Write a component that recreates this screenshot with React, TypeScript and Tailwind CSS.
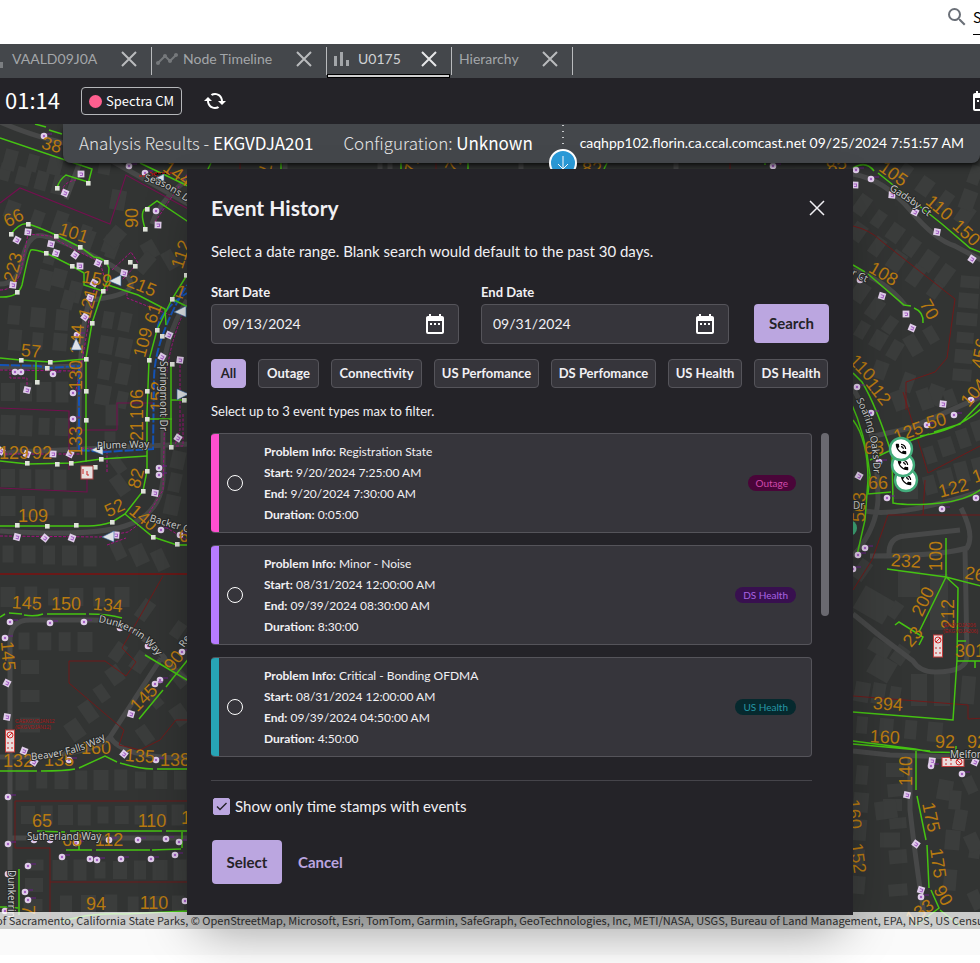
import { useState } from "react";
import {
  MdCached,
  MdDateRange,
  MdPhoneInTalk,
  MdSearch,
  MdTimeline,
} from "react-icons/md";

type Label = [text: string, x: number, y: number, angle: number];

const footage: Label[] = [
  ["38", 52, 144, 15],
  ["144", 178, 173, 35],
  ["66", 13, 217, -25],
  ["101", 74, 232, 18],
  ["90", 131, 218, -90],
  ["223", 12, 267, -75],
  ["159", 97, 278, 10],
  ["215", 142, 285, 22],
  ["112", 180, 254, -72],
  ["1", 181, 291, 20],
  ["61", 152, 313, -70],
  ["109", 142, 342, -75],
  ["121", 87, 303, -75],
  ["144", 76, 339, -86],
  ["57", 31, 350, 5],
  ["130", 75, 375, -90],
  ["106", 136, 404, -90],
  ["121", 136, 436, -90],
  ["152", 156, 396, -88],
  ["133", 75, 441, -90],
  ["129", 14, 452, 0],
  ["92", 42, 452, 0],
  ["82", 135, 478, -75],
  ["52", 114, 507, -25],
  ["109", 33, 515, 0],
  ["140", 144, 517, 40],
  ["6", 184, 535, 0],
  ["145", 27, 602, 3],
  ["150", 66, 603, 0],
  ["134", 108, 604, 5],
  ["145", 9, 656, 85],
  ["90", 173, 660, -50],
  ["145", 143, 697, -45],
  ["132", 18, 760, 0],
  ["135", 59, 759, 0],
  ["160", 96, 747, 0],
  ["135", 140, 755, 4],
  ["138", 175, 759, 0],
  ["65", 42, 820, 0],
  ["110", 152, 820, 0],
  ["1", 186, 817, 0],
  ["68", 72, 839, 0],
  ["112", 109, 839, 0],
  ["94", 96, 903, 0],
  ["110", 154, 902, 0],
  ["7", 29, 910, 90],
  ["17", 267, 164, 100],
  ["71", 411, 164, -80],
  ["72", 454, 162, -60],
  ["82", 592, 168, 0],
  ["85", 836, 164, -20],
  ["105", 894, 173, 35],
  ["110", 940, 207, 40],
  ["150", 967, 232, 42],
  ["108", 884, 273, 30],
  ["70", 930, 309, 60],
  ["110", 863, 367, 45],
  ["112", 879, 391, 52],
  ["104", 973, 392, -50],
  ["456", 979, 353, -80],
  ["125", 908, 431, -20],
  ["50", 936, 420, -15],
  ["68", 874, 447, 0],
  ["66", 878, 482, 0],
  ["122", 953, 487, -15],
  ["1", 977, 475, -20],
  ["563", 858, 507, -88],
  ["232", 906, 560, 4],
  ["100", 935, 556, -90],
  ["200", 922, 601, -65],
  ["212", 947, 614, -90],
  ["23", 912, 636, -50],
  ["26", 975, 573, 10],
  ["301", 970, 650, 0],
  ["394", 888, 703, 4],
  ["160", 885, 736, 3],
  ["92", 945, 741, 0],
  ["92", 977, 741, 0],
  ["140", 905, 771, -90],
  ["175", 932, 817, 78],
  ["175", 939, 863, 82],
  ["90", 944, 895, 60],
  ["133", 919, 911, -35],
  ["160", 855, 814, 85],
  ["152", 859, 858, 82],
];

const streets: { name: string; path: string }[] = [
  { name: "Seasons Dr", path: "M144 181Q166 185 190 205" },
  { name: "Springmont Dr", path: "M160 361V440" },
  { name: "Plume Way", path: "M97 449L160 447" },
  { name: "Backer Ct", path: "M149 521L200 536" },
  { name: "Dunkerrin Way", path: "M98 622Q145 630 162 664" },
  { name: "Rea", path: "M184 648L195 632" },
  { name: "Beaver Falls Way", path: "M31 760Q90 756 120 728" },
  { name: "Sutherland Way", path: "M27 840L112 840" },
  { name: "Dunkerrin", path: "M8 870V926" },
  { name: "Gadsby Ct", path: "M889 190Q910 202 937 224" },
  { name: "r Ct", path: "M851 275L873 286" },
  { name: "Soaring Oaks Dr", path: "M856 400Q876 436 873 482" },
  { name: "Dr", path: "M853 509L870 509" },
  { name: "Melford", path: "M950 758L990 758" },
];

const roads = [
  "M0 122Q30 135 60 142T110 160T190 205",
  "M80 162L66 199",
  "M187 180Q160 200 152 224",
  "M0 284Q18 284 22 262T36 236T105 262T90 300Q78 330 79 450",
  "M0 367H50L78 366",
  "M0 455Q10 451 40 451L190 444",
  "M187 300Q163 340 163 380V480Q160 515 125 526T0 531",
  "M10 926V640Q10 620 30 620H92Q120 620 145 640T164 660L187 680",
  "M160 660L110 737Q122 758 187 758",
  "M110 737Q95 757 0 757",
  "M10 838H190",
  "M285 163V169",
  "M380 163V169M390 163V169M521 163V169",
  "M676 163V169",
  "M853 174Q885 180 910 210T955 246L985 262",
  "M853 270Q885 280 905 305",
  "M853 388Q878 430 878 500Q876 530 853 556",
  "M870 437L910 428L985 395",
  "M865 511Q900 518 985 490",
  "M961 508Q975 535 967 548Q940 556 870 556",
  "M889 556Q888 537 905 536L960 530",
  "M965 549L967 655Q968 672 935 672Q920 672 913 661L880 636L853 614",
  "M853 751L890 755L985 758",
  "M910 756V810Q918 880 926 926",
];

const greenLines = [
  "M0 138L92 169L88 184M88 182L66 175Q59 180 57 188",
  "M35 124L46 127M49 130L62 134",
  "M11 234Q20 222 28 224T56 235L80 247L94 257Q106 258 109 268L108 280L103 291L84 285V273L72 266L46 253Q33 249 31 250T22 285Q18 298 0 297",
  "M108 285L138 295L165 309L166 325",
  "M103 290L92 323L86 358V462",
  "M0 358L20 360L50 362L86 359M36 362V382",
  "M145 228Q139 210 147 208L157 201L190 223",
  "M140 163L190 187",
  "M187 275L172 299L157 330L149 360L147 413V471L143 491L125 514L112 522Q100 526 88 526H0M125 514L153 537L177 545H190",
  "M147 456L101 459L72 463L28 464L0 461",
  "M171 447V364M171 400H190M147 419H172M165 380V400",
  "M172 299L190 308",
  "M0 617L5 614M9 613L22 614M24 615Q35 617 43 614M47 614H86M89 614Q108 614 122 618",
  "M145 655L187 680M173 678L166 687M163 690L139 719M190 657L173 678",
  "M0 771H37M41 771Q65 771 75 769M79 768L105 756L117 762M120 763Q140 769 153 769M157 769H190",
  "M37 831L65 832M70 831H162M166 831H190M66 850H92M96 850H150M152 850L181 849M182 832V848M79 840V850",
  "M19 869V915M0 907H10L18 908",
  "M60 922Q90 912 125 914L187 911",
  "M208 169L211 163M281 169V163M401 163V169M468 163V169M604 169L607 163M765 165V163",
  "M853 168Q866 160 874 171M878 173L942 224L970 248L985 254",
  "M853 265L865 272M868 274L904 305L911 306M914 308Q924 312 923 323",
  "M853 373L862 382Q876 405 892 455L893 503Q910 506 940 503T985 486",
  "M853 420Q868 440 868 480L865 520L857 555",
  "M850 400Q866 435 870 475L868 494L891 492M870 460L889 451",
  "M893 449L912 440L929 434M934 432L960 424L985 398M920 436Q960 430 985 405",
  "M887 569L946 577L985 587M946 577V538M946 577L919 632M895 625L899 622L923 637L919 645M946 577L958 588L957 660L953 720L853 712",
  "M957 641H966M957 661H985M975 661V668",
  "M853 741L915 749L931 752L985 753M853 744L930 751M916 751V790M917 796L926 840M927 845L929 888M931 890L939 908L915 926M940 910L960 926M956 746V754",
];

const blueLines = [
  "M0 365L38 366L48 368L79 366V450L104 452L153 449L154 380Q154 340 187 285",
  "M157 330Q160 310 187 293",
];

const magentaLines = [
  "M0 203L20 188L110 224L126 175L190 210",
  "M0 408L69 411V470M117 430V403H153M69 430H117",
  "M0 488L87 492V470",
];

const dashedLines = [
  "M0 290Q18 290 22 265L28 234L50 236L75 250L100 262L108 290L94 290L84 350L75 395",
  "M112 270L131 252L138 263L122 280",
  "M127 293V298L170 315M0 370L75 371M10 372V378H27V388",
  "M0 536L100 537L128 532L145 520L163 490L165 400Q165 350 187 305",
  "M107 545L126 538M107 472V450L80 448",
  "M0 454L80 454M180 365V430L175 445M183 414V446H176",
  "M62 192Q63 182 76 180M155 222L190 170M150 518L187 540",
];

const darkRedLines = [
  "M163 576L122 648L136 662L126 676L105 661H69V683L124 730L119 745L140 750L160 740L176 720H190",
  "M15 848V801H190M15 848H50V926M50 882H190",
  "M240 163V169M436 163V169M730 163V169",
  "M853 226Q870 230 880 240L955 299L947 358L935 372L906 382V410",
  "M903 392L928 473L980 446M925 480L923 515M853 590L872 560L888 515H985",
  "M853 696L968 705V719L985 718",
];

// x1, y1, x2, y2, how many, angle
const houseRows: number[][] = [
  [5, 172, 60, 185, 4, 15], [105, 165, 118, 200, 2, 10], [10, 160, 55, 166, 3, 15],
  [12, 210, 112, 250, 5, 20], [45, 280, 75, 292, 2, 15], [50, 256, 68, 300, 3, 15],
  [14, 315, 62, 320, 3, 5], [15, 340, 60, 342, 3, 5], [8, 392, 62, 392, 4, 0],
  [8, 425, 62, 427, 4, 2], [108, 320, 103, 395, 4, 10], [125, 322, 122, 400, 4, 12],
  [112, 415, 110, 440, 2, 0], [8, 478, 60, 480, 4, 0], [8, 506, 90, 508, 5, 0],
  [8, 554, 90, 556, 5, 0], [118, 550, 160, 560, 3, -25], [120, 485, 118, 465, 2, -35],
  [178, 460, 172, 505, 3, 12], [8, 597, 122, 597, 6, 0], [24, 641, 85, 642, 4, 0],
  [118, 652, 140, 662, 2, 35], [145, 610, 178, 630, 2, 35], [30, 667, 30, 725, 3, 90],
  [75, 730, 115, 675, 4, -35], [155, 700, 180, 678, 2, -40], [145, 735, 180, 715, 2, -35],
  [22, 780, 180, 780, 9, 0], [28, 815, 178, 815, 9, 0], [60, 870, 180, 870, 7, 0],
  [35, 865, 33, 905, 3, 90], [66, 905, 178, 905, 6, 0], [60, 222, 110, 245, 3, 20],
  [150, 250, 170, 260, 2, -30], [115, 237, 145, 263, 2, 40],
  [905, 172, 965, 215, 4, 35], [975, 175, 968, 200, 2, 20], [862, 205, 945, 275, 6, 35],
  [858, 232, 935, 290, 5, 35], [860, 292, 890, 325, 3, 35], [862, 330, 895, 350, 3, 30],
  [970, 282, 962, 375, 6, 95], [913, 345, 931, 335, 2, -30], [880, 370, 935, 395, 3, 20],
  [900, 400, 950, 398, 3, -20], [930, 455, 980, 430, 4, -18], [930, 485, 978, 466, 4, -15],
  [862, 570, 895, 610, 2, 35], [900, 655, 880, 665, 2, 35], [862, 692, 895, 695, 3, 10],
  [862, 725, 935, 732, 4, 5], [862, 775, 858, 885, 5, 5], [898, 790, 898, 890, 4, 85],
  [895, 770, 890, 840, 3, 90], [945, 790, 975, 850, 3, 10], [970, 785, 976, 900, 3, -25],
  [955, 800, 950, 880, 3, 5],
];

const bigHouses: number[][] = [
  [874, 605, 34, 26, 30], [909, 584, 22, 26, 0], [939, 602, 18, 56, 0],
  [905, 492, 26, 14, 0], [919, 690, 16, 32, 0], [942, 690, 16, 32, 0],
  [968, 690, 14, 28, 5], [882, 668, 24, 22, 30], [880, 648, 22, 14, 30],
  [886, 810, 22, 18, -8],
];

const joints: number[][] = [
  [57, 188], [88, 183], [11, 234], [28, 224], [56, 236], [80, 247], [106, 262],
  [46, 253], [72, 266], [17, 292], [103, 291], [92, 323], [86, 359], [21, 360],
  [50, 362], [37, 382], [86, 391], [147, 209], [145, 229], [172, 299], [157, 330],
  [149, 360], [147, 391], [172, 364], [86, 420], [147, 419], [147, 471], [143, 491],
  [112, 522], [76, 525], [47, 526], [17, 525], [153, 537], [177, 544], [171, 447],
  [101, 459], [71, 463], [57, 464], [27, 463], [130, 262], [135, 266], [95, 467],
  [162, 336], [47, 368], [184, 400], [186, 275],
];

const squareTaps: number[][] = [
  [81, 174], [65, 193], [28, 232], [17, 240], [51, 244], [75, 255], [56, 253],
  [80, 266], [98, 263], [13, 285], [94, 283], [124, 273], [85, 317], [90, 298],
  [158, 225], [169, 335], [180, 360], [162, 357], [27, 390], [1, 451], [27, 454],
  [53, 454], [70, 454], [155, 493], [178, 438], [17, 537], [45, 538], [72, 538],
  [116, 535], [7, 683], [7, 717], [34, 762], [131, 714], [124, 754], [24, 751],
  [892, 195], [915, 212], [937, 232], [972, 259], [882, 296], [906, 314], [912, 328],
  [943, 404], [859, 476], [907, 795], [916, 844], [921, 890], [855, 185], [975, 762],
  [932, 761],
];

const roundTaps: number[][] = [
  [44, 136], [129, 166], [145, 173], [156, 211], [15, 372], [21, 372], [53, 374],
  [73, 393], [73, 419], [77, 335], [159, 468], [159, 475], [161, 530], [180, 535],
  [10, 622], [50, 623], [84, 622], [5, 638], [182, 652], [120, 628], [148, 646],
  [160, 680], [155, 684], [69, 760], [156, 760], [8, 797], [8, 844], [34, 840],
  [50, 840], [76, 843], [109, 840], [138, 840], [166, 839], [179, 842], [62, 857],
  [90, 859], [97, 860], [121, 859], [151, 859], [175, 855], [28, 866], [25, 892],
  [28, 900], [8, 874], [5, 911], [185, 901], [773, 166], [856, 170], [871, 179],
  [860, 280], [857, 387], [871, 413], [927, 425], [954, 415], [971, 400], [879, 462],
  [887, 498], [942, 509], [976, 498], [865, 548], [858, 555], [853, 569], [931, 766],
  [962, 774], [921, 897],
];

// direction the amplifier points to, in degrees
const amplifiers: number[][] = [
  [115, 281, 180], [180, 312, 180], [76, 344, -90], [97, 450, 180], [183, 394, 0],
  [108, 537, 180], [158, 180, 180],
];

const cabinets: number[][] = [
  [10, 741, 0], [938, 646, 0], [953, 762, 90],
];

const phones: number[][] = [
  [906, 480], [903, 465], [901, 449],
];

function Houses() {
  return (
    <g fill="#3b3d3c">
      {houseRows.flatMap(([x1, y1, x2, y2, count, angle], row) =>
        Array.from({ length: count }, (_, i) => {
          const t = count > 1 ? i / (count - 1) : 0;
          const x = x1 + (x2 - x1) * t;
          const y = y1 + (y2 - y1) * t;
          const w = 11 + ((row + i * 3) % 5);
          const h = 17 + ((row * 2 + i) % 5);
          return (
            <rect
              key={`${row}-${i}`}
              x={x - w / 2}
              y={y - h / 2}
              width={w}
              height={h}
              transform={`rotate(${angle} ${x} ${y})`}
            />
          );
        }),
      )}
      {bigHouses.map(([x, y, w, h, angle]) => (
        <rect
          key={`${x}-${y}`}
          x={x - w / 2}
          y={y - h / 2}
          width={w}
          height={h}
          transform={`rotate(${angle} ${x} ${y})`}
        />
      ))}
    </g>
  );
}

function PlantMap() {
  return (
    <svg
      viewBox="0 124 980 805"
      preserveAspectRatio="xMidYMin slice"
      className="absolute inset-0 size-full bg-[#323433]"
      role="img"
      aria-label="Network plant map"
    >
      <Houses />
      <g fill="none" stroke="#474848" strokeWidth="5">
        {roads.map((d) => (
          <path key={d} d={d} />
        ))}
      </g>
      <g fill="none" stroke="#761616" strokeWidth="0.9">
        {darkRedLines.map((d) => (
          <path key={d} d={d} />
        ))}
      </g>
      <path d="M0 574H190" stroke="#7c1010" strokeWidth="1.4" />
      <g fill="none" stroke="#73104f" strokeWidth="1.1">
        {magentaLines.map((d) => (
          <path key={d} d={d} />
        ))}
      </g>
      <g fill="none" stroke="#a3117f" strokeWidth="1" strokeDasharray="3 1.5">
        {dashedLines.map((d) => (
          <path key={d} d={d} />
        ))}
      </g>
      <g fill="none" stroke="#1453b8" strokeWidth="2" strokeDasharray="9 2">
        {blueLines.map((d) => (
          <path key={d} d={d} />
        ))}
      </g>
      <g fill="none" stroke="#45c312" strokeWidth="1.5">
        {greenLines.map((d) => (
          <path key={d} d={d} />
        ))}
      </g>
      <g fill="#dfe3da">
        {joints.map(([x, y]) => (
          <rect key={`${x}-${y}`} x={x - 2} y={y - 2} width="4.6" height="4.6" />
        ))}
      </g>
      {squareTaps.map(([x, y], i) => (
        <g key={i} transform={`translate(${x} ${y}) rotate(${(i * 23) % 40})`}>
          <rect x="-3.4" y="-3.4" width="6.8" height="6.8" fill="#e0cdea" />
          <path d="M-1.5 -1H1.5V1.5H-1" fill="none" stroke="#a45fc4" />
        </g>
      ))}
      {roundTaps.map(([x, y], i) => (
        <g key={i}>
          <path d={`M${x + 3} ${y - 2}h5`} stroke="#6d1f8a" strokeWidth="1" />
          <circle cx={x} cy={y} r="3.3" fill="#e0cdea" />
          <circle cx={x} cy={y} r="1.2" fill="#a45fc4" />
        </g>
      ))}
      {cabinets.map(([x, y, angle]) => (
        <g key={x} transform={`translate(${x} ${y}) rotate(${angle})`}>
          <rect x="-4.5" y="-11" width="9" height="22" fill="#eadcdc" stroke="#c23b3b" />
          <circle cy="-6" r="3" fill="none" stroke="#cf2b2b" />
          <path d="M-2 -4L2 -8M-3 2h2M1 2h2M-3 7h2M1 7h2" stroke="#cf2b2b" />
        </g>
      ))}
      <g>
        <rect x="81" y="466" width="12" height="13" fill="#e6e0e0" stroke="#a34141" />
        <path d="M83 469v5M87 471v4h2" stroke="#c22" fill="none" />
      </g>
      <path d="M139 176h12l4 -3h20M150 172l10 6" stroke="#e01414" strokeDasharray="3 1" />
      <g
        fontFamily="Liberation Sans, Arial, sans-serif"
        fontSize="18"
        fill="#b87a10"
        textAnchor="middle"
      >
        {footage.map(([text, x, y, angle], i) => (
          <text key={i} x={x} y={y + 7} transform={`rotate(${angle} ${x} ${y})`}>
            {text}
          </text>
        ))}
      </g>
      {amplifiers.map(([x, y, angle]) => (
        <path
          key={`${x}-${y}`}
          d="M-6 -5L6 0L-6 6Z"
          fill="#dfe3e6"
          stroke="#2a5e9e"
          strokeWidth="0.6"
          transform={`translate(${x} ${y}) rotate(${angle})`}
        />
      ))}
      <g fill="#a81616" fontFamily="Liberation Sans, Arial, sans-serif" fontSize="5">
        <text x="15" y="723">CAEKGVDJAN12</text>
        <text x="15" y="729">(EKGVDJAN12)</text>
        <text x="944" y="627">EKGVDJA206</text>
        <text x="943" y="633">(EKGVDJA206)</text>
      </g>
      <g
        fontFamily="Noto Sans, sans-serif"
        fontSize="10"
        fill="#c9caca"
        stroke="#262827"
        strokeWidth="2"
        paintOrder="stroke"
      >
        {streets.map(({ name, path }, i) => (
          <g key={i}>
            <path id={`street-${i}`} d={path} fill="none" stroke="none" />
            <text>
              <textPath href={`#street-${i}`}>{name}</textPath>
            </text>
          </g>
        ))}
      </g>
      <circle cx="849" cy="528" r="8" fill="#3fa878" />
      {phones.map(([x, y]) => (
        <g key={y}>
          <circle cx={x} cy={y} r="11" fill="#fff" stroke="#43ad7c" strokeWidth="2.4" />
          <MdPhoneInTalk x={x - 7} y={y - 7} size={14} color="#050505" />
        </g>
      ))}
    </svg>
  );
}

function Cross({ className }: { className: string }) {
  return (
    <svg viewBox="0 0 16 16" className={className} fill="none" stroke="currentColor">
      <path d="M1 1L15 15M15 1L1 15" />
    </svg>
  );
}

function Bars() {
  return (
    <svg viewBox="0 0 15 14" className="h-3.5 w-[15px]" fill="currentColor">
      <path d="M0 4h3v10H0zM6 0h3v14H6zM12 8h3v6h-3z" />
    </svg>
  );
}

function TabBar() {
  return (
    <nav
      aria-label="Open views"
      className="flex h-[34px] items-start overflow-hidden bg-[#44474b] pt-[3px] font-['Lato',sans-serif] text-sm text-[#a3a6a9]"
    >
      <div className="-ml-3 flex h-7 w-[164px] items-center border-r border-[#b9bbbd] pr-3.5">
        <span className="text-[#7b7e81]">
          <Bars />
        </span>
        <a href="#vaald" className="ml-[9px] flex-1 pb-1">
          VAALD09J0A
        </a>
        <button type="button" aria-label="Close VAALD09J0A" className="pb-1">
          <Cross className="size-4 stroke-2 text-[#b9bbbd]" />
        </button>
      </div>
      <div className="flex h-7 w-[175px] items-center border-r border-[#b9bbbd] pr-3.5 pl-[3px]">
        <MdTimeline className="mb-1 size-6 text-[#75787b]" />
        <a href="#timeline" className="ml-1 flex-1 pb-1">
          Node Timeline
        </a>
        <button type="button" aria-label="Close Node Timeline" className="pb-1">
          <Cross className="size-4 stroke-2 text-[#b9bbbd]" />
        </button>
      </div>
      <div className="relative flex h-7 w-[125px] items-center border-r border-[#b9bbbd] pr-3.5 pl-[7px] text-[#d0d2d3]">
        <span className="pb-1 text-[#a3a6a9]">
          <Bars />
        </span>
        <a href="#u0175" aria-current="page" className="ml-[9px] flex-1 pb-1">
          U0175
        </a>
        <button type="button" aria-label="Close U0175" className="pb-1">
          <Cross className="size-4 stroke-2 text-[#e6e7e8]" />
        </button>
        <span className="absolute -bottom-[3px] left-0 h-1 w-[123px] border border-black bg-[#cfcfcf]" />
      </div>
      <div className="flex h-7 w-[121px] items-center border-r border-[#b9bbbd] pr-3.5 pl-[7px]">
        <a href="#hierarchy" className="flex-1 pb-1">
          Hierarchy
        </a>
        <button type="button" aria-label="Close Hierarchy" className="pb-1">
          <Cross className="size-4 stroke-2 text-[#b9bbbd]" />
        </button>
      </div>
    </nav>
  );
}

function Toolbar() {
  return (
    <div className="flex h-[46px] items-center overflow-hidden bg-[#242328] font-['Noto_Sans_CJK_SC',sans-serif] text-white">
      <span className="w-[81px] pb-1 pl-[5px] text-[22px] leading-7">01:14</span>
      <button
        type="button"
        className="flex h-7 w-[101px] items-center gap-1 rounded border border-[#b5b7ba] pl-[7px] text-[13px] whitespace-nowrap"
      >
        <span className="size-[13px] shrink-0 rounded-full bg-[#ff5f8f]" />
        <span>Spectra CM</span>
      </button>
      <button type="button" aria-label="Refresh" className="ml-[21px]">
        <MdCached className="size-6 -scale-x-100" />
      </button>
      <button type="button" aria-label="Pick a date" className="-mr-3.5 ml-auto">
        <MdDateRange className="size-6" />
      </button>
    </div>
  );
}

function AnalysisBar() {
  return (
    <div className="relative ml-[63px] flex h-[39px] items-center rounded-b-lg bg-[#44474b] pr-4 pl-4 whitespace-nowrap text-white shadow-md shadow-black/60">
      <div className="flex w-[470px] shrink-0 gap-[30px] pb-0.5 font-['Noto_Sans_CJK_SC',sans-serif] text-[17px] leading-6 font-light text-[#e3e4e5]">
        <span>
          Analysis Results - <b className="text-white">EKGVDJA201</b>
        </span>
        <span>
          Configuration: <b className="text-white">Unknown</b>
        </span>
      </div>
      <div className="h-full w-7 shrink-0">
        <svg viewBox="0 0 2 25" className="mx-auto h-[25px] w-0.5">
          <path d="M1 1V22" stroke="#c9cbcd" strokeWidth="2" strokeDasharray="1 5" />
        </svg>
        <button
          type="button"
          aria-label="Expand results"
          className="flex size-7 items-center justify-center rounded-full border-2 border-white bg-[#2a9ad8]"
        >
          <svg viewBox="0 0 12 14" className="h-3.5 w-3" fill="none" stroke="#fff">
            <path d="M6 0V13M1 8L6 13L11 8" />
          </svg>
        </button>
      </div>
      <span className="ml-auto pb-0.5 font-['Lato',sans-serif] text-sm">
        caqhpp102.florin.ca.ccal.comcast.net 09/25/2024 7:51:57 AM
      </span>
    </div>
  );
}

const eventTypes = [
  { name: "All", className: "w-[35px]" },
  { name: "Outage", className: "w-[61px]" },
  { name: "Connectivity", className: "w-[91px]" },
  { name: "US Perfomance", className: "w-[105px]" },
  { name: "DS Perfomance", className: "w-[105px]" },
  { name: "US Health", className: "w-[74px]" },
  { name: "DS Health", className: "w-[74px]" },
];

const events = [
  {
    info: "Registration State",
    start: "9/20/2024 7:25:00 AM",
    end: "9/20/2024 7:30:00 AM",
    duration: "0:05:00",
    type: "Outage",
    stripe: "bg-[#ff4fd0]",
    pill: "bg-[#4a0539] text-[#d049ac]",
  },
  {
    info: "Minor - Noise",
    start: "08/31/2024 12:00:00 AM",
    end: "09/39/2024 08:30:00 AM",
    duration: "8:30:00",
    type: "DS Health",
    stripe: "bg-[#b77bff]",
    pill: "bg-[#38104f] text-[#a963e2]",
  },
  {
    info: "Critical - Bonding OFDMA",
    start: "08/31/2024 12:00:00 AM",
    end: "09/39/2024 04:50:00 AM",
    duration: "4:50:00",
    type: "US Health",
    stripe: "bg-[#27a4b5]",
    pill: "bg-[#06292e] text-[#2697a5]",
  },
];

function DateField({ id, label, value }: { id: string; label: string; value: string }) {
  return (
    <div className="w-[248px]">
      <label htmlFor={id} className="block h-5 text-[13px] leading-4 font-bold">
        {label}
      </label>
      <div className="flex h-10 items-center rounded border border-[#55545a] bg-[#36353b] pr-[11px] pl-[11px]">
        <input
          id={id}
          type="text"
          defaultValue={value}
          className="min-w-0 flex-1 bg-transparent text-sm outline-none"
        />
        <button type="button" aria-label={`Pick ${label.toLowerCase()}`}>
          <MdDateRange className="size-6 text-white" />
        </button>
      </div>
    </div>
  );
}

function EventHistory() {
  const [filter, setFilter] = useState("All");

  return (
    <section
      role="dialog"
      aria-labelledby="event-history-title"
      className="w-[666px] bg-[#242328] px-6 pb-[31px] font-['Lato',sans-serif] text-[#f1f0f4] shadow-2xl shadow-black/40"
    >
      <header className="flex items-center justify-between pt-[26px]">
        <h1 id="event-history-title" className="text-[21px] leading-[26px] font-bold">
          Event History
        </h1>
        <button type="button" aria-label="Close" className="p-1">
          <Cross className="size-4 stroke-[1.5]" />
        </button>
      </header>
      <p className="mt-5 text-[15px] leading-5">
        Select a date range. Blank search would default to the past 30 days.
      </p>

      <form className="mt-[23px] flex items-end gap-[22px]">
        <DateField id="start-date" label="Start Date" value="09/13/2024" />
        <DateField id="end-date" label="End Date" value="09/31/2024" />
        <button
          type="button"
          className="mb-px ml-[3px] h-[39px] w-[75px] rounded bg-[#bba6e0] text-[15px] font-bold text-[#242328]"
        >
          Search
        </button>
      </form>

      <div className="mt-[15px] flex gap-3">
        {eventTypes.map(({ name, className }) => (
          <button
            key={name}
            type="button"
            aria-pressed={filter === name}
            onClick={() => setFilter(name)}
            className={`${className} h-[29px] shrink-0 rounded border text-[13px] font-bold whitespace-nowrap ${
              filter === name
                ? "border-[#bba6e0] bg-[#bba6e0] text-[#242328]"
                : "border-[#55545a] bg-[#36353b]"
            }`}
          >
            {name}
          </button>
        ))}
      </div>
      <p className="mt-[15px] text-[13px] leading-4">
        Select up to 3 event types max to filter.
      </p>

      <div className="mt-3.5 flex gap-[9px]">
        <ul className="flex w-[601px] flex-col gap-3">
          {events.map((event, i) => (
            <li
              key={event.type}
              className="flex h-[100px] items-center overflow-hidden rounded border border-l-0 border-[#55545a] bg-[#36353b] pr-[15px]"
            >
              <span className={`-my-px h-[100px] w-2 shrink-0 ${event.stripe}`} />
              <input
                type="radio"
                id={`event-${i}`}
                name="event"
                className="ml-2 size-4 appearance-none rounded-full border border-white checked:border-[5px]"
              />
              <label
                htmlFor={`event-${i}`}
                className="ml-[21px] flex-1 text-xs leading-[21px]"
              >
                <span className="font-bold">Problem Info:</span> {event.info}
                <br />
                <span className="font-bold">Start:</span> {event.start}
                <br />
                <span className="font-bold">End:</span> {event.end}
                <br />
                <span className="font-bold">Duration:</span> {event.duration}
              </label>
              <span className={`rounded-full px-2 text-[10px] leading-4 ${event.pill}`}>
                {event.type}
              </span>
            </li>
          ))}
        </ul>
        <div className="h-[183px] w-2 rounded-full bg-[#6a6970]" />
      </div>

      <hr className="mt-[23px] mr-[17px] border-[#45444a]" />
      <div className="mt-[17px] flex items-center gap-[5px]">
        <span className="relative ml-0.5 flex size-[17px]">
          <input
            id="with-events"
            type="checkbox"
            defaultChecked
            className="peer size-[17px] appearance-none rounded-xs border border-[#bba6e0] checked:bg-[#bba6e0]"
          />
          <svg
            viewBox="0 0 17 17"
            className="pointer-events-none absolute inset-0 hidden size-[17px] peer-checked:block"
            fill="none"
            stroke="#242328"
            strokeWidth="1.4"
          >
            <path d="M4 8.5L7 11.5L13.5 5" />
          </svg>
        </span>
        <label htmlFor="with-events" className="text-[15px] leading-[17px]">
          Show only time stamps with events
        </label>
      </div>
      <div className="mt-[25px] ml-px flex items-center gap-4 text-[15px] font-bold">
        <button type="button" className="h-11 w-[70px] rounded bg-[#bba6e0] text-[#242328]">
          Select
        </button>
        <button type="button" className="h-11 text-[#bba6e0]">
          Cancel
        </button>
      </div>
    </section>
  );
}

export default function App() {
  return (
    <div className="relative min-h-screen overflow-hidden bg-white">
      <header className="flex h-11 justify-end overflow-hidden font-['Noto_Sans_CJK_SC',sans-serif] text-black">
        <label htmlFor="search" className="mt-[5px] mr-1">
          <MdSearch className="size-6 text-[#6b7078]" />
          <span className="sr-only">Search</span>
        </label>
        <input
          id="search"
          type="text"
          defaultValue="Search"
          className="-mr-[140px] h-[35px] w-[147px] border-b border-black text-sm outline-none"
        />
      </header>
      <TabBar />
      <Toolbar />
      <main className="relative flex h-[805px] flex-col justify-between overflow-hidden">
        <PlantMap />
        <AnalysisBar />
        <footer className="relative -ml-1 h-[17px] overflow-hidden bg-white/75 font-['Noto_Sans_CJK_SC',sans-serif] text-[11px] leading-[17px] whitespace-nowrap text-[#323232]">
          of Sacramento, California State Parks, © OpenStreetMap, Microsoft, Esri, TomTom, Garmin, SafeGraph, GeoTechnologies, Inc, METI/NASA, USGS, Bureau of Land Management, EPA, NPS, US Census Bureau, USDA, USFWS
        </footer>
      </main>
      <div className="h-[26px] bg-[#fafafa]" />
      <div className="absolute inset-x-0 top-[169px] flex justify-center pl-[60px]">
        <EventHistory />
      </div>
    </div>
  );
}
